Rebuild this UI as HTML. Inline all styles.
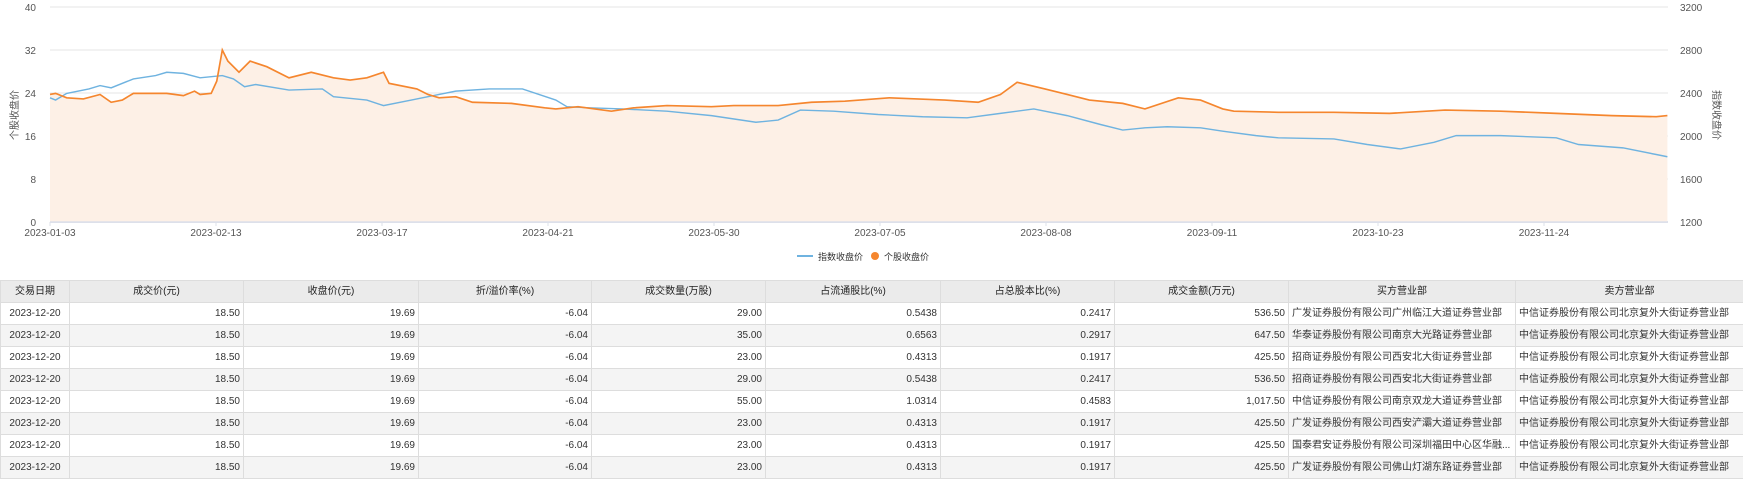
<!DOCTYPE html>
<html><head><meta charset="utf-8"><style>
body{margin:0;width:1743px;height:479px;overflow:hidden;background:#fff;font-family:"Liberation Sans","Noto Sans CJK SC",sans-serif;color:#333}
svg{position:absolute;left:0;top:0}
table{position:absolute;left:0;top:280px;border-collapse:collapse;table-layout:fixed;width:1743px;font-size:10px}
td,th{height:21px;line-height:21px;vertical-align:middle;border:1px solid #ddd;padding:0 3px;white-space:nowrap;overflow:hidden}
th{background:#ebebeb;font-weight:normal;color:#222}
td{text-align:right}
td:first-child{text-align:center}
td.l{text-align:left}
tr:nth-child(odd) td{background:#f4f4f4}
tr:nth-child(even) td{background:#fff}
</style></head><body>
<svg width="1743" height="280" font-family="Liberation Sans, Noto Sans CJK SC, sans-serif" font-size="10" fill="#555">
<g stroke="#e6e6e6" stroke-width="1">
<line x1="50" x2="1668" y1="7" y2="7"/><line x1="50" x2="1668" y1="50" y2="50"/><line x1="50" x2="1668" y1="93" y2="93"/><line x1="50" x2="1668" y1="136" y2="136"/><line x1="50" x2="1668" y1="179" y2="179"/>
</g>
<line x1="50" x2="1668" y1="222" y2="222" stroke="#dde0ea" stroke-width="2"/>
<g stroke="#dde0ea"><line x1="50" x2="50" y1="222" y2="226"/><line x1="216" x2="216" y1="222" y2="226"/><line x1="382" x2="382" y1="222" y2="226"/><line x1="548" x2="548" y1="222" y2="226"/><line x1="714" x2="714" y1="222" y2="226"/><line x1="880" x2="880" y1="222" y2="226"/><line x1="1046" x2="1046" y1="222" y2="226"/><line x1="1212" x2="1212" y1="222" y2="226"/><line x1="1378" x2="1378" y1="222" y2="226"/><line x1="1544" x2="1544" y1="222" y2="226"/></g>
<g text-anchor="end"><text x="36" y="11">40</text><text x="36" y="54">32</text><text x="36" y="97">24</text><text x="36" y="140">16</text><text x="36" y="183">8</text><text x="36" y="226">0</text></g>
<g><text x="1680" y="11">3200</text><text x="1680" y="54">2800</text><text x="1680" y="97">2400</text><text x="1680" y="140">2000</text><text x="1680" y="183">1600</text><text x="1680" y="226">1200</text></g>
<text transform="translate(18,115) rotate(-90)" text-anchor="middle">个股收盘价</text>
<text transform="translate(1713,115) rotate(90)" text-anchor="middle">指数收盘价</text>
<g text-anchor="middle"><text x="50" y="236">2023-01-03</text><text x="216" y="236">2023-02-13</text><text x="382" y="236">2023-03-17</text><text x="548" y="236">2023-04-21</text><text x="714" y="236">2023-05-30</text><text x="880" y="236">2023-07-05</text><text x="1046" y="236">2023-08-08</text><text x="1212" y="236">2023-09-11</text><text x="1378" y="236">2023-10-23</text><text x="1544" y="236">2023-11-24</text></g>
<g transform="scale(1.1116)">
<polygon fill="#fdf0e6" points="45,85 50,84 60,88 75,89 90,85 100,92 110,90 120,84 150,84 165,86 175,82 180,85 190,84 195,73 200,45 205,55 215,65 225,55 240,60 260,70 280,65 300,70 315,72 330,70 345,65 350,75 375,80 385,85 395,88 410,87 425,92 460,93 490,97 500,98 520,96 550,100 570,97 600,95 640,96 660,95 700,95 730,92 760,91 800,88 850,90 880,92 900,85 915,74 940,80 960,85 980,90 1010,93 1030,98 1060,88 1080,90 1100,98 1110,100 1150,101 1200,101 1250,102 1300,99 1350,100 1400,102 1450,104 1490,105 1500,104 1500,199 45,199"/>
<polyline fill="none" stroke="#6fb3e0" stroke-width="1.3" points="45,88 50,90 60,84 80,80 90,77 100,79 120,71 140,68 150,65 165,66 180,70 200,68 210,71 220,78 230,76 260,81 290,80 300,87 330,90 345,95 370,90 390,86 410,82 440,80 470,80 500,90 510,96 530,97 560,98 600,100 640,104 680,110 700,108 720,99 750,100 790,103 830,105 870,106 900,102 930,98 960,104 990,112 1010,117 1030,115 1050,114 1080,115 1100,118 1130,122 1150,124 1200,125 1230,130 1260,134 1290,128 1310,122 1350,122 1400,124 1420,130 1460,133 1490,139 1500,141"/>
<polyline fill="none" stroke="#f5862e" stroke-width="1.5" points="45,85 50,84 60,88 75,89 90,85 100,92 110,90 120,84 150,84 165,86 175,82 180,85 190,84 195,73 200,45 205,55 215,65 225,55 240,60 260,70 280,65 300,70 315,72 330,70 345,65 350,75 375,80 385,85 395,88 410,87 425,92 460,93 490,97 500,98 520,96 550,100 570,97 600,95 640,96 660,95 700,95 730,92 760,91 800,88 850,90 880,92 900,85 915,74 940,80 960,85 980,90 1010,93 1030,98 1060,88 1080,90 1100,98 1110,100 1150,101 1200,101 1250,102 1300,99 1350,100 1400,102 1450,104 1490,105 1500,104"/>
</g>
<line x1="797" x2="813" y1="256" y2="256" stroke="#6fb3e0" stroke-width="2"/>
<text x="818" y="260" font-size="9" fill="#333">指数收盘价</text>
<circle cx="875" cy="256" r="4" fill="#f5862e"/>
<text x="884" y="260" font-size="9" fill="#333">个股收盘价</text>
</svg>
<table>
<colgroup><col style="width:69px"><col style="width:174px"><col style="width:175px"><col style="width:173px"><col style="width:174px"><col style="width:175px"><col style="width:174px"><col style="width:174px"><col style="width:227px"><col style="width:228px"></colgroup>
<tr><th>交易日期</th><th>成交价(元)</th><th>收盘价(元)</th><th>折/溢价率(%)</th><th>成交数量(万股)</th><th>占流通股比(%)</th><th>占总股本比(%)</th><th>成交金额(万元)</th><th>买方营业部</th><th>卖方营业部</th></tr>
<tr><td>2023-12-20</td><td>18.50</td><td>19.69</td><td>-6.04</td><td>29.00</td><td>0.5438</td><td>0.2417</td><td>536.50</td><td class="l">广发证券股份有限公司广州临江大道证券营业部</td><td class="l">中信证券股份有限公司北京复外大街证券营业部</td></tr>
<tr><td>2023-12-20</td><td>18.50</td><td>19.69</td><td>-6.04</td><td>35.00</td><td>0.6563</td><td>0.2917</td><td>647.50</td><td class="l">华泰证券股份有限公司南京大光路证券营业部</td><td class="l">中信证券股份有限公司北京复外大街证券营业部</td></tr>
<tr><td>2023-12-20</td><td>18.50</td><td>19.69</td><td>-6.04</td><td>23.00</td><td>0.4313</td><td>0.1917</td><td>425.50</td><td class="l">招商证券股份有限公司西安北大街证券营业部</td><td class="l">中信证券股份有限公司北京复外大街证券营业部</td></tr>
<tr><td>2023-12-20</td><td>18.50</td><td>19.69</td><td>-6.04</td><td>29.00</td><td>0.5438</td><td>0.2417</td><td>536.50</td><td class="l">招商证券股份有限公司西安北大街证券营业部</td><td class="l">中信证券股份有限公司北京复外大街证券营业部</td></tr>
<tr><td>2023-12-20</td><td>18.50</td><td>19.69</td><td>-6.04</td><td>55.00</td><td>1.0314</td><td>0.4583</td><td>1,017.50</td><td class="l">中信证券股份有限公司南京双龙大道证券营业部</td><td class="l">中信证券股份有限公司北京复外大街证券营业部</td></tr>
<tr><td>2023-12-20</td><td>18.50</td><td>19.69</td><td>-6.04</td><td>23.00</td><td>0.4313</td><td>0.1917</td><td>425.50</td><td class="l">广发证券股份有限公司西安浐灞大道证券营业部</td><td class="l">中信证券股份有限公司北京复外大街证券营业部</td></tr>
<tr><td>2023-12-20</td><td>18.50</td><td>19.69</td><td>-6.04</td><td>23.00</td><td>0.4313</td><td>0.1917</td><td>425.50</td><td class="l">国泰君安证券股份有限公司深圳福田中心区华融...</td><td class="l">中信证券股份有限公司北京复外大街证券营业部</td></tr>
<tr><td>2023-12-20</td><td>18.50</td><td>19.69</td><td>-6.04</td><td>23.00</td><td>0.4313</td><td>0.1917</td><td>425.50</td><td class="l">广发证券股份有限公司佛山灯湖东路证券营业部</td><td class="l">中信证券股份有限公司北京复外大街证券营业部</td></tr>
</table>
</body></html>
